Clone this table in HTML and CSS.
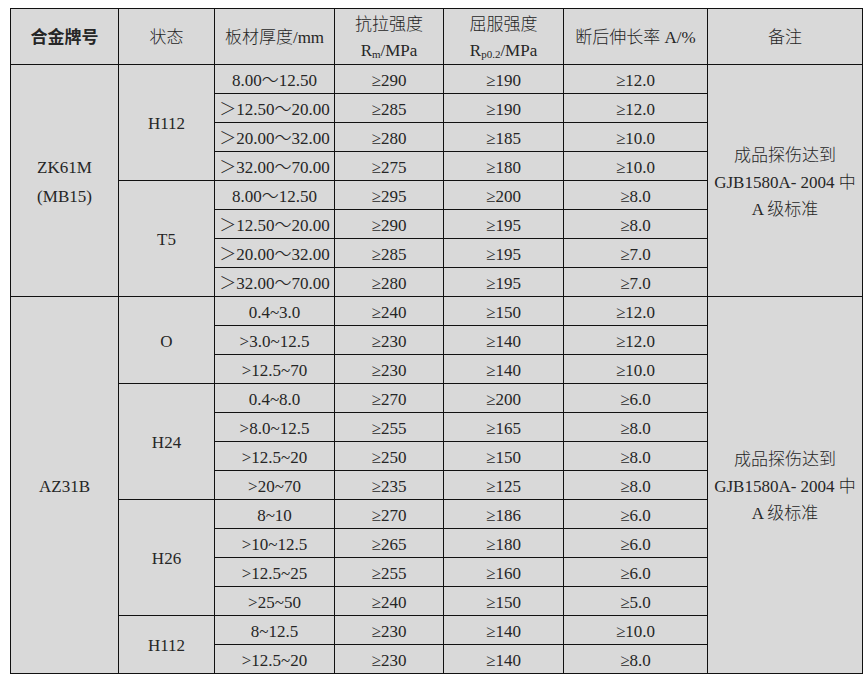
FILE: index.html
```html
<!DOCTYPE html>
<html lang="zh-CN">
<head>
<meta charset="utf-8">
<title>镁合金板材力学性能</title>
<link rel="stylesheet" href="styles.css">
</head>
<body>
<table class="spec">
  <colgroup>
    <col class="c-alloy"><col class="c-state"><col class="c-thick"><col class="c-rm"><col class="c-rp"><col class="c-el"><col class="c-note">
  </colgroup>
  <thead>
    <tr class="head">
      <th class="bold">合金牌号</th>
      <th>状态</th>
      <th>板材厚度/mm</th>
      <th><span class="ln">抗拉强度</span><span class="ln">R<sub>m</sub>/MPa</span></th>
      <th><span class="ln">屈服强度</span><span class="ln">R<sub>p0.2</sub>/MPa</span></th>
      <th>断后伸长率 A/%</th>
      <th>备注</th>
    </tr>
  </thead>
  <tbody>
    <tr><td rowspan="8" class="alloy"><span class="ln">ZK61M</span><span class="ln">(MB15)</span></td><td rowspan="4">H112</td><td>8.00～12.50</td><td>≥290</td><td>≥190</td><td>≥12.0</td><td rowspan="8" class="note"><span class="ln">成品探伤达到</span><span class="ln">GJB1580A- 2004 中</span><span class="ln">A 级标准</span></td></tr>
    <tr><td>＞12.50～20.00</td><td>≥285</td><td>≥190</td><td>≥12.0</td></tr>
    <tr><td>＞20.00～32.00</td><td>≥280</td><td>≥185</td><td>≥10.0</td></tr>
    <tr><td>＞32.00～70.00</td><td>≥275</td><td>≥180</td><td>≥10.0</td></tr>
    <tr><td rowspan="4">T5</td><td>8.00～12.50</td><td>≥295</td><td>≥200</td><td>≥8.0</td></tr>
    <tr><td>＞12.50～20.00</td><td>≥290</td><td>≥195</td><td>≥8.0</td></tr>
    <tr><td>＞20.00～32.00</td><td>≥285</td><td>≥195</td><td>≥7.0</td></tr>
    <tr><td>＞32.00～70.00</td><td>≥280</td><td>≥195</td><td>≥7.0</td></tr>
    <tr><td rowspan="13" class="alloy">AZ31B</td><td rowspan="3">O</td><td>0.4~3.0</td><td>≥240</td><td>≥150</td><td>≥12.0</td><td rowspan="13" class="note"><span class="ln">成品探伤达到</span><span class="ln">GJB1580A- 2004 中</span><span class="ln">A 级标准</span></td></tr>
    <tr><td>&gt;3.0~12.5</td><td>≥230</td><td>≥140</td><td>≥12.0</td></tr>
    <tr><td>&gt;12.5~70</td><td>≥230</td><td>≥140</td><td>≥10.0</td></tr>
    <tr><td rowspan="4">H24</td><td>0.4~8.0</td><td>≥270</td><td>≥200</td><td>≥6.0</td></tr>
    <tr><td>&gt;8.0~12.5</td><td>≥255</td><td>≥165</td><td>≥8.0</td></tr>
    <tr><td>&gt;12.5~20</td><td>≥250</td><td>≥150</td><td>≥8.0</td></tr>
    <tr><td>&gt;20~70</td><td>≥235</td><td>≥125</td><td>≥8.0</td></tr>
    <tr><td rowspan="4">H26</td><td>8~10</td><td>≥270</td><td>≥186</td><td>≥6.0</td></tr>
    <tr><td>&gt;10~12.5</td><td>≥265</td><td>≥180</td><td>≥6.0</td></tr>
    <tr><td>&gt;12.5~25</td><td>≥255</td><td>≥160</td><td>≥6.0</td></tr>
    <tr><td>&gt;25~50</td><td>≥240</td><td>≥150</td><td>≥5.0</td></tr>
    <tr><td rowspan="2">H112</td><td>8~12.5</td><td>≥230</td><td>≥140</td><td>≥10.0</td></tr>
    <tr><td>&gt;12.5~20</td><td>≥230</td><td>≥140</td><td>≥8.0</td></tr>
  </tbody>
</table>
</body>
</html>
```
FILE: styles.css
```css
html, body {
  background: #ffffff;
}
body {
  margin: 8px 0 0 10px;
  font-family: "Liberation Serif", "Noto Sans CJK SC", serif;
  font-size: 17px;
  font-weight: 300;
  color: #262626;
}
.spec {
  border-collapse: collapse;
  table-layout: fixed;
  width: 852px;
  background: #d9d9d9;
}
.c-alloy { width: 108px; }
.c-state { width: 96px; }
.c-thick { width: 120px; }
.c-rm { width: 109px; }
.c-rp { width: 120px; }
.c-el { width: 144px; }
.c-note { width: 155px; }
.spec th,
.spec td {
  border: 1px solid #111111;
  padding: 3px 0 0 0;
  text-align: center;
  vertical-align: middle;
  font-weight: 300;
  line-height: 20px;
  white-space: nowrap;
}
.spec tr.head {
  height: 56px;
}
.spec tbody tr {
  height: 29px;
}
.spec th.bold {
  font-weight: bold;
}
.ln {
  display: block;
}
.head .ln {
  line-height: 26px;
}
.alloy .ln {
  line-height: 29px;
}
.note .ln {
  line-height: 27px;
}
sub {
  font-size: 11px;
  vertical-align: -2px;
  line-height: 0;
}
```
